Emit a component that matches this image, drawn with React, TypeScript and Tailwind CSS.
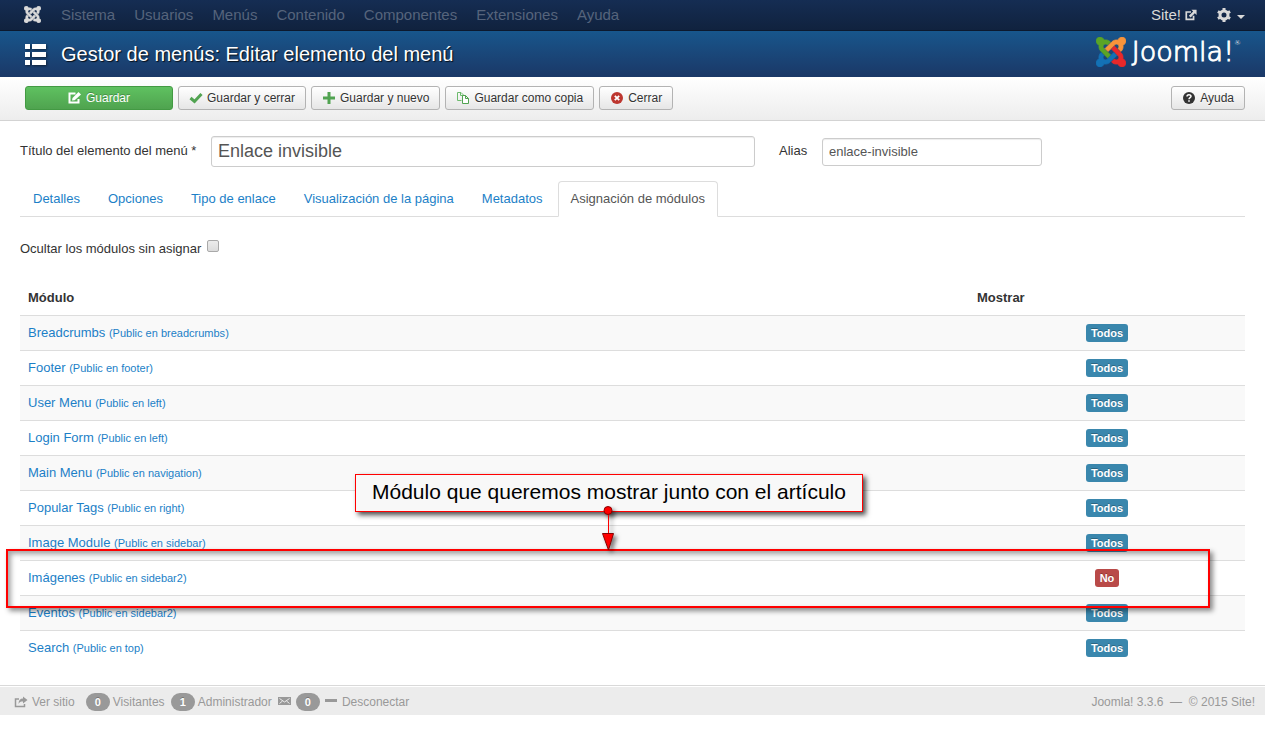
import { ReactNode } from 'react'

interface ModuleRow {
  name: string
  position: string
  status: 'Todos' | 'No'
}

const menuItems = ['Sistema', 'Usuarios', 'Menús', 'Contenido', 'Componentes', 'Extensiones', 'Ayuda']

const tabs = [
  'Detalles',
  'Opciones',
  'Tipo de enlace',
  'Visualización de la página',
  'Metadatos',
  'Asignación de módulos'
]

const modules: ModuleRow[] = [
  { name: 'Breadcrumbs', position: 'breadcrumbs', status: 'Todos' },
  { name: 'Footer', position: 'footer', status: 'Todos' },
  { name: 'User Menu', position: 'left', status: 'Todos' },
  { name: 'Login Form', position: 'left', status: 'Todos' },
  { name: 'Main Menu', position: 'navigation', status: 'Todos' },
  { name: 'Popular Tags', position: 'right', status: 'Todos' },
  { name: 'Image Module', position: 'sidebar', status: 'Todos' },
  { name: 'Imágenes', position: 'sidebar2', status: 'No' },
  { name: 'Eventos', position: 'sidebar2', status: 'Todos' },
  { name: 'Search', position: 'top', status: 'Todos' }
]

// One arm of the Joomla mark, the other three are quarter turns of it
const ARM =
  'M16.719 14.759L14.22 17.26l-2.37 2.37-.462.466c-1.368 1.365-3.297 1.83-5.047 1.397-.327 1.424-1.604 2.49-3.13 2.49C1.438 23.983 0 22.547 0 20.772c0-1.518 1.055-2.789 2.469-3.123-.446-1.76.016-3.705 1.396-5.08l.179-.18 2.37 2.37-.184.181c-.769.779-.769 2.024 0 2.789.771.78 2.022.78 2.787 0l.465-.465 2.367-2.371 2.502-2.506z'

function JoomlaMark({ className, colors }: { className: string; colors: string[] }) {
  return (
    <svg viewBox="0 0 24 24" className={className} aria-hidden="true">
      {colors.map((color, i) => (
        <path key={i} d={ARM} fill={color} stroke={color} strokeWidth="0.6" transform={`rotate(${i * 90} 12 12)`} />
      ))}
    </svg>
  )
}

function Icon({ className = 'h-3 w-3.5', children }: { className?: string; children: ReactNode }) {
  return (
    <svg viewBox="0 0 14 12" className={`shrink-0 ${className}`} fill="none" aria-hidden="true">
      {children}
    </svg>
  )
}

function ToolbarButton({ icon, children }: { icon: ReactNode; children: ReactNode }) {
  return (
    <button
      type="button"
      className="flex h-6 items-center gap-1 rounded-[3px] border border-[#b3b3b3] bg-linear-to-b from-white to-[#e6e6e6] px-2.5 text-xs text-[#333] [text-shadow:0_1px_1px_rgba(255,255,255,0.75)]"
    >
      {icon}
      {children}
    </button>
  )
}

function CountBadge({ children }: { children: ReactNode }) {
  return (
    <span className="rounded-[9px] bg-[#999] px-[9px] text-[11px] leading-[18px] font-bold text-white [text-shadow:0_-1px_0_rgba(0,0,0,0.25)]">
      {children}
    </span>
  )
}

function Navbar() {
  return (
    <nav className="flex h-[31px] items-center border-b border-[#0c192e] bg-linear-to-b from-[#152d53] to-[#10223e] pr-5 pb-px pl-6 text-[15px]">
      <JoomlaMark className="h-[17px] w-[17px]" colors={['#d9d9d9', '#d9d9d9', '#d9d9d9', '#d9d9d9']} />
      <ul className="ml-5 flex gap-[19px] text-[#56647c]">
        {menuItems.map(item => (
          <li key={item}>{item}</li>
        ))}
      </ul>
      <a href="#" className="ml-auto flex items-center gap-1 text-[#d9d9d9]">
        Site!
        <Icon className="h-3 w-3">
          <path d="M7 2.500H1.500v8.500h8.500V7" stroke="currentColor" strokeWidth="2" />
          <path d="M7.500 0H13.500V6l-2-2-5 5-2-2 5-5z" fill="currentColor" />
        </Icon>
      </a>
      <button type="button" aria-label="Opciones de usuario" className="ml-5 flex items-center gap-1.5 text-[#d9d9d9]">
        <svg viewBox="0 0 14 14" className="h-3.5 w-3.5" fill="none" aria-hidden="true">
          <circle cx="7" cy="7" r="4" stroke="currentColor" strokeWidth="3" />
          <path
            d="M7 0v2M7 12v2M.9 3.500l1.800 1M11.300 9.500l1.800 1M.9 10.500l1.800-1M11.300 4.500l1.800-1"
            stroke="currentColor"
            strokeWidth="3"
          />
        </svg>
        <svg viewBox="0 0 8 4" className="mt-1 h-1 w-2" aria-hidden="true">
          <path d="M0 0h8L4 4z" fill="currentColor" />
        </svg>
      </button>
    </nav>
  )
}

function PageHeader() {
  return (
    <header className="flex h-[46px] items-center bg-linear-to-b from-[#17568c] to-[#1a3867] px-6 text-white">
      <svg viewBox="0 0 22 21" className="ml-px h-[21px] w-[22px] drop-shadow-[1px_1px_1px_rgba(0,0,0,0.5)]" fill="#fff" aria-hidden="true">
        <path d="M0 0h5v5H0zM7 0h14v5H7zM0 8h5v5H0zM7 8h14v5H7zM0 16h5v5H0zM7 16h14v5H7z" />
      </svg>
      <h1 className="ml-3.5 text-xl [text-shadow:1px_1px_1px_rgba(0,0,0,0.8)]">
        Gestor de menús: Editar elemento del menú
      </h1>
      <div className="ml-auto flex items-center pb-1">
        <JoomlaMark className="h-[30px] w-[30px]" colors={['#1371b5', '#5aa426', '#f9943a', '#e9282a']} />
        <span className="ml-1.5 flex font-['DejaVu_Sans',sans-serif] text-[27px] leading-8 font-extralight">
          <span className="[-webkit-text-stroke:1px_white]">Joomla!</span>
          <sup className="top-0 pt-1 text-[7px] leading-none">®</sup>
        </span>
      </div>
    </header>
  )
}

function Toolbar() {
  return (
    <div className="flex h-11 items-center gap-[5px] border-b border-[#d3d3d3] bg-linear-to-b from-white to-[#ededed] pr-5 pb-px pl-[25px]">
      <button
        type="button"
        className="flex h-6 w-[148px] items-center justify-center gap-1 rounded-[3px] border border-[#439a43] bg-linear-to-b from-[#5fc160] to-[#4fa34f] text-xs text-white [text-shadow:0_-1px_0_rgba(0,0,0,0.25)]"
      >
        <Icon>
          <path d="M7.500 1.500H1.500v9h9V7" stroke="currentColor" strokeWidth="2" />
          <path d="M4 8.500L4.500 6 10.500 0 13 2.500 6.700 8.200z" fill="currentColor" />
        </Icon>
        Guardar
      </button>
      <ToolbarButton
        icon={
          <Icon>
            <path d="M1.500 6l4 3.500 7-7.500" stroke="#51a351" strokeWidth="3" />
          </Icon>
        }
      >
        Guardar y cerrar
      </ToolbarButton>
      <ToolbarButton
        icon={
          <Icon>
            <path d="M7 0v12M1 6h12" stroke="#51a351" strokeWidth="3" />
          </Icon>
        }
      >
        Guardar y nuevo
      </ToolbarButton>
      <ToolbarButton
        icon={
          <Icon>
            <path d="M5.500 8.500h-4v-8h3.500l2.500 2.500M4.500.5V3.500H7" stroke="#6dbb6d" />
            <path d="M6.500 3.500h3l3 3v5h-6zM9.500 3.500v3h3" stroke="#51a351" fill="#fff" />
          </Icon>
        }
      >
        Guardar como copia
      </ToolbarButton>
      <ToolbarButton
        icon={
          <Icon>
            <circle cx="7" cy="6" r="6" fill="#bd362f" />
            <path d="M4.800 3.800l4.400 4.400M9.200 3.800L4.800 8.200" stroke="#fff" strokeWidth="1.800" />
          </Icon>
        }
      >
        Cerrar
      </ToolbarButton>
      <div className="ml-auto">
        <ToolbarButton
          icon={
            <Icon>
              <circle cx="7" cy="6" r="6" fill="#333" />
              <path d="M5 4.500C5 2.300 9 2.300 9 4.300 9 5.700 7 5.500 7 7.300" stroke="#fff" strokeWidth="1.500" />
              <path d="M6.200 8.300h1.600v1.500H6.200z" fill="#fff" />
            </Icon>
          }
        >
          Ayuda
        </ToolbarButton>
      </div>
    </div>
  )
}

function TitleFields() {
  return (
    <div className="flex h-[31px] items-center">
      <label htmlFor="title" className="w-[191px] shrink-0 pb-px">
        Título del elemento del menú *
      </label>
      <input
        id="title"
        defaultValue="Enlace invisible"
        className="h-[31px] w-[544px] min-w-0 rounded-[3px] border border-[#ccc] px-1.5 text-lg text-[#555] shadow-[inset_0_1px_1px_rgba(0,0,0,0.075)]"
      />
      <label htmlFor="alias" className="ml-6 w-[43px] shrink-0 pb-px">
        Alias
      </label>
      <input
        id="alias"
        defaultValue="enlace-invisible"
        className="h-7 w-[220px] min-w-0 rounded-[3px] border border-[#ccc] px-1.5 text-[#555] shadow-[inset_0_1px_1px_rgba(0,0,0,0.075)]"
      />
    </div>
  )
}

function Tabs() {
  return (
    <ul className="mt-3.5 flex gap-0.5 border-b border-[#ddd]">
      {tabs.map(tab => (
        <li key={tab} className="-mb-px">
          <a
            href="#"
            className={
              tab === 'Asignación de módulos'
                ? 'block rounded-t border border-[#ddd] border-b-white bg-white px-3 py-2 text-[#555]'
                : 'block rounded-t border border-transparent px-3 py-2 text-[#1c7fc7]'
            }
          >
            {tab}
          </a>
        </li>
      ))}
    </ul>
  )
}

function StatusLabel({ status }: { status: ModuleRow['status'] }) {
  return (
    <span
      className={`inline-block rounded-[3px] px-[5px] text-[11px] leading-[18px] font-bold text-white [text-shadow:0_-1px_0_rgba(0,0,0,0.25)] ${
        status === 'No' ? 'bg-[#b94a48]' : 'bg-[#3a87ad]'
      }`}
    >
      {status}
    </span>
  )
}

function ModulesTable() {
  return (
    <table className="w-full table-fixed border-collapse">
      <thead>
        <tr className="h-[34px] text-left">
          <th className="px-2">Módulo</th>
          <th className="w-[276px] px-2">Mostrar</th>
        </tr>
      </thead>
      <tbody>
        {modules.map(row => (
          <tr key={row.name} className="h-[35px] border-t border-[#ddd] odd:bg-[#f9f9f9]">
            <td className="px-2">
              <a href="#" className="text-[#1c7fc7]">
                {row.name} <small className="text-[11px]">(Public en {row.position})</small>
              </a>
            </td>
            <td className="px-2 text-center">
              <StatusLabel status={row.status} />
            </td>
          </tr>
        ))}
      </tbody>
    </table>
  )
}

// Red frame, callout and arrow laid over the table
function Annotation() {
  return (
    <div className="pointer-events-none absolute inset-0">
      <div className="absolute top-[268px] right-[35px] -left-3.5 h-[59px] border-2 border-[#f00] shadow-[3px_3px_5px_rgba(0,0,0,0.45),inset_3px_3px_5px_rgba(0,0,0,0.35)]" />
      <p className="absolute top-[193px] left-[335px] h-[38px] w-[508px] border border-[#f00] bg-[#f8f8f8] pl-4 text-[21px] leading-[34px] whitespace-nowrap text-black shadow-[3px_3px_5px_rgba(0,0,0,0.7)]">
        Módulo que queremos mostrar junto con el artículo
      </p>
      <svg
        viewBox="0 0 14 48"
        className="absolute top-[223px] left-[581px] h-12 w-3.5 drop-shadow-[3px_3px_2px_rgba(0,0,0,0.5)]"
        aria-hidden="true"
      >
        <path d="M7.500 6v24" stroke="#f00" />
        <circle cx="7" cy="6.500" r="4" fill="#f00" stroke="#800" />
        <path d="M1.500 29.500h11L7.500 46z" fill="#f00" stroke="#800" />
      </svg>
    </div>
  )
}

function StatusBar() {
  return (
    <footer className="mt-5 border-t border-[#d9d9d9] pt-px text-xs text-[#999]">
      <div className="flex h-7 items-center bg-[#ececec] pt-0.5 pr-2.5 pl-3.5">
        <a href="#" className="flex items-center gap-1">
          <Icon>
            <path d="M5 3H1.500v7.500h9V8" stroke="currentColor" strokeWidth="1.500" />
            <path d="M9 .5l4.500 3.500L9 7.500v-2C6.500 5.500 5.500 6 4.500 8c0-3.500 1.500-5.500 4.500-5.500z" fill="currentColor" />
          </Icon>
          Ver sitio
        </a>
        <span className="ml-[11px] flex items-center gap-[3px]">
          <CountBadge>0</CountBadge>
          Visitantes
        </span>
        <span className="ml-1.5 flex items-center gap-[3px]">
          <CountBadge>1</CountBadge>
          Administrador
        </span>
        <span className="ml-1.5 flex items-center gap-1">
          <Icon>
            <path d="M0 1h13v8H0z" fill="currentColor" />
            <path d="M1.500 2.500l5 3.500 5-3.500M1.500 7.500L4.500 5M11.500 7.500L8.500 5" stroke="#ececec" />
          </Icon>
          <CountBadge>0</CountBadge>
        </span>
        <a href="#" className="ml-1 flex items-center gap-1">
          <Icon>
            <path d="M1 4.500h12" stroke="currentColor" strokeWidth="3" />
          </Icon>
          Desconectar
        </a>
        <span className="ml-auto">Joomla! 3.3.6 &nbsp;—&nbsp; © 2015 Site!</span>
      </div>
    </footer>
  )
}

export default function App() {
  return (
    <div className="bg-white font-['Liberation_Sans',Arial,sans-serif] text-[13px] leading-[18px] text-[#333]">
      <Navbar />
      <PageHeader />
      <Toolbar />
      <main className="px-5 pt-[15px]">
        <TitleFields />
        <Tabs />
        <div className="mt-[23px] flex gap-1.5">
          <label htmlFor="hide-unassigned">Ocultar los módulos sin asignar</label>
          <input
            id="hide-unassigned"
            type="checkbox"
            className="h-3 w-3 appearance-none rounded-xs border border-[#a9a9a9] bg-linear-to-b from-[#ececec] to-[#dcdcdc]"
          />
        </div>
        <div className="relative mt-[23px]">
          <ModulesTable />
          <Annotation />
        </div>
      </main>
      <StatusBar />
    </div>
  )
}
